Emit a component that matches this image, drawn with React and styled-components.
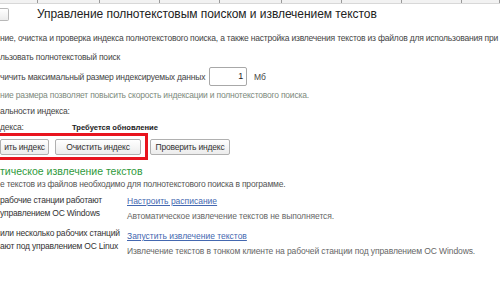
import React from "react";
import styled, { createGlobalStyle } from "styled-components";

const GlobalStyle = createGlobalStyle`
  html, body {
    margin: 0;
    padding: 0;
    background: #ffffff;
  }
  body {
    font-family: "Liberation Sans", Arial, sans-serif;
    font-size: 8.5px;
    letter-spacing: -0.2px;
    color: #333;
    width: 500px;
    height: 300px;
    overflow: hidden;
  }
`;

const App = () => {
  return (
    <>
      <GlobalStyle />
      <Page>
        <TopStrip>
          {[38, 62, 60, 60, 62, 60, 60, 60, 38].map((w, i) => (
            <StripCell key={i} style={{ width: w }} />
          ))}
        </TopStrip>

        <Header>
          <StubButton />
          <Title>Управление полнотекстовым поиском и извлечением текстов</Title>
        </Header>

        <Desc>
          ние, очистка и проверка индекса полнотекстового поиска, а также настройка извлечения текстов из файлов для использования при п
        </Desc>

        <Line top={8}>льзовать полнотекстовый поиск</Line>

        <LimitRow>
          <span>чичить максимальный размер индексируемых данных</span>
          <SizeInput>1</SizeInput>
          <span>Мб</span>
        </LimitRow>

        <Hint>ние размера позволяет повысить скорость индексации и полнотекстового поиска.</Hint>

        <Line top={5}>альности индекса:</Line>

        <StatusRow>
          <StatusLabel>декса:</StatusLabel>
          <StatusValue>Требуется обновление</StatusValue>
        </StatusRow>

        <ButtonsArea>
          <Highlight>
            <Button width={49}>ить индекс</Button>
            <Button width={86}>Очистить индекс</Button>
          </Highlight>
          <Button width={80}>Проверить индекс</Button>
        </ButtonsArea>

        <SectionTitle>тическое извлечение текстов</SectionTitle>
        <SectionDesc>е текстов из файлов необходимо для полнотекстового поиска в программе.</SectionDesc>

        <OptionGrid>
          <OptionLeft>
            рабочие станции работают
            <br />
            управлением ОС Windows
          </OptionLeft>
          <OptionRight>
            <Link>Настроить расписание</Link>
            <Note>Автоматическое извлечение текстов не выполняется.</Note>
          </OptionRight>

          <OptionLeft>
            или несколько рабочих станций
            <br />
            ают под управлением ОС Linux
          </OptionLeft>
          <OptionRight second>
            <Link>Запустить извлечение текстов</Link>
            <Note>Извлечение текстов в тонком клиенте на рабочей станции под управлением ОС Windows.</Note>
          </OptionRight>
        </OptionGrid>
      </Page>
    </>
  );
};

export default App;

/* ================== STYLES ================== */
const Page = styled.div`
  width: 500px;
  height: 300px;
  overflow: hidden;
  display: flex;
  flex-direction: column;
`;

const TopStrip = styled.div`
  display: flex;
  height: 3px;
  background: #f2f2f2;
  border-bottom: 1px solid #d8d8d8;
`;

const StripCell = styled.div`
  flex: 0 0 auto;
  border-right: 1px solid #9a9a9a;
  box-sizing: border-box;
`;

const Header = styled.div`
  display: flex;
  align-items: center;
  height: 20px;
`;

const StubButton = styled.div`
  width: 8px;
  height: 11px;
  border: 1px solid #b8b8b8;
  border-left: none;
  border-radius: 0 2px 2px 0;
  background: linear-gradient(#ffffff, #ececec);
`;

const Title = styled.div`
  margin-left: 28px;
  font-size: 12px;
  letter-spacing: -0.05px;
  color: #222;
  white-space: nowrap;
`;

const Desc = styled.div`
  margin-top: 9px;
  line-height: 11px;
  color: #444;
  white-space: nowrap;
`;

const Line = styled.div`
  margin-top: ${(p) => p.top}px;
  line-height: 11px;
  color: #444;
  white-space: nowrap;
`;

const LimitRow = styled.div`
  display: flex;
  align-items: center;
  gap: 7px;
  margin-top: 3px;
  height: 21px;
  color: #444;
  white-space: nowrap;

  span:first-child {
    width: 202px;
  }
`;

const SizeInput = styled.div`
  box-sizing: border-box;
  width: 38px;
  height: 19px;
  border: 1px solid #a8a8a8;
  border-radius: 2px;
  text-align: right;
  padding-right: 3px;
  line-height: 17px;
  font-size: 9px;
  color: #222;
`;

const Hint = styled.div`
  margin-top: 3px;
  line-height: 11px;
  color: #7d8a7d;
  white-space: nowrap;
`;

const StatusRow = styled.div`
  display: flex;
  margin-top: 5px;
  line-height: 11px;
`;

const StatusLabel = styled.span`
  width: 72px;
  color: #444;
`;

const StatusValue = styled.span`
  font-weight: bold;
  font-size: 7.6px;
  letter-spacing: 0;
  color: #222;
`;

const ButtonsArea = styled.div`
  display: flex;
  align-items: center;
`;

const Highlight = styled.div`
  display: flex;
  align-items: center;
  gap: 6px;
  box-sizing: border-box;
  height: 27px;
  padding-right: 4px;
  border: 3px solid #e8141e;
  border-left: none;
  margin-right: 2px;
`;

const Button = styled.div`
  box-sizing: border-box;
  width: ${(p) => p.width}px;
  height: 16px;
  display: flex;
  align-items: center;
  justify-content: center;
  border: 1px solid #b0b0b0;
  border-radius: 2px;
  background: linear-gradient(#ffffff, #ececec);
  color: #333;
  font-size: 8.5px;
  white-space: nowrap;
`;

const SectionTitle = styled.div`
  margin-top: 5px;
  font-size: 10.5px;
  letter-spacing: 0;
  line-height: 13px;
  color: #2f9a3c;
  white-space: nowrap;
`;

const SectionDesc = styled.div`
  margin-top: 1px;
  line-height: 11px;
  color: #555;
  white-space: nowrap;
`;

const OptionGrid = styled.div`
  display: grid;
  grid-template-columns: 127px 1fr;
  row-gap: 5px;
  margin-top: 4px;
`;

const OptionLeft = styled.div`
  line-height: 12.5px;
  color: #333;
  white-space: nowrap;
`;

const OptionRight = styled.div`
  display: flex;
  flex-direction: column;
  gap: 4px;
  padding-top: ${(p) => (p.second ? 4 : 2)}px;
`;

const Link = styled.span`
  color: #4468b0;
  text-decoration: underline;
  line-height: 11px;
  white-space: nowrap;
  letter-spacing: 0;
`;

const Note = styled.span`
  color: #666;
  line-height: 11px;
  white-space: nowrap;
  letter-spacing: -0.1px;
`;
